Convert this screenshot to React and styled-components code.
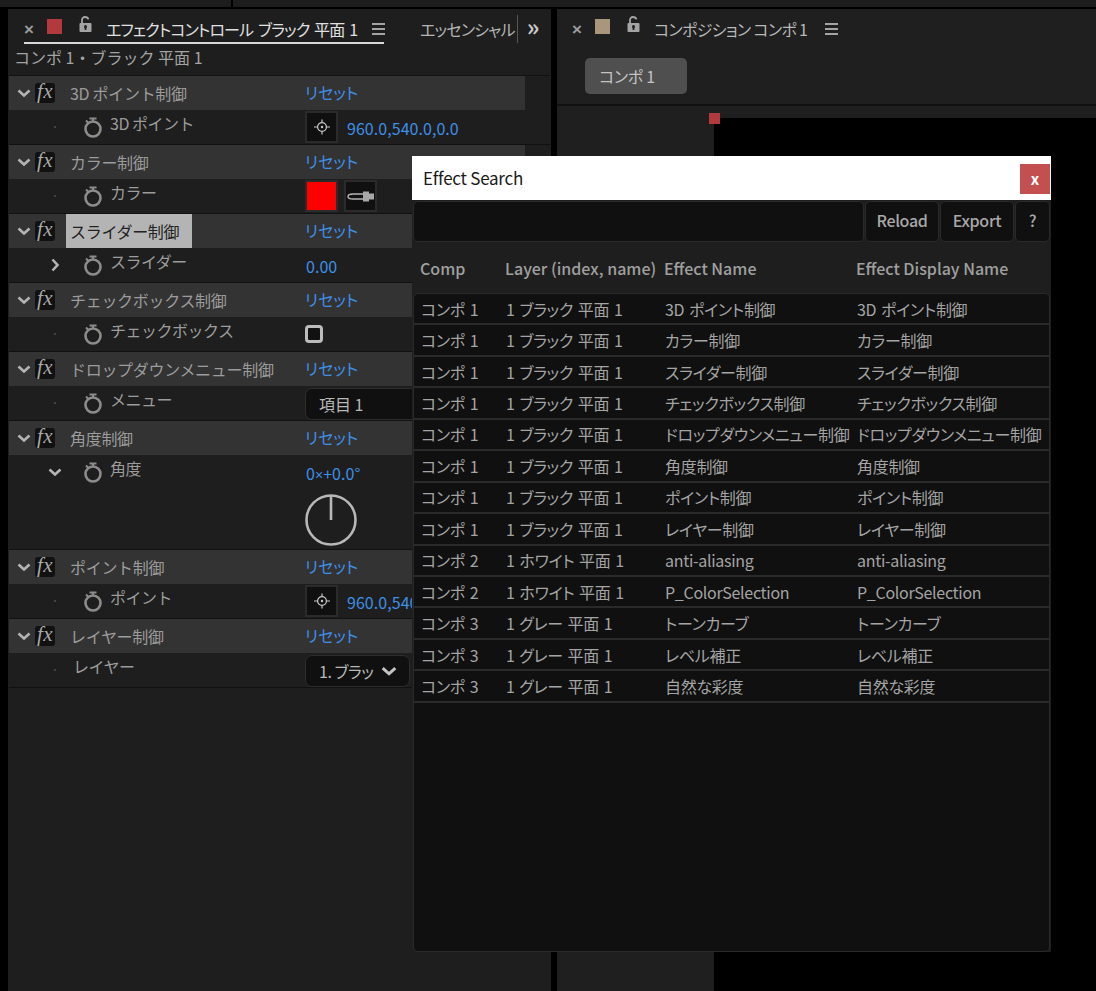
import React from "react";
import styled, { createGlobalStyle } from "styled-components";

const groups = [
  { name: "3D ポイント制御", label: "3D ポイント", kind: "point", value: "960.0,540.0,0.0" },
  { name: "カラー制御", label: "カラー", kind: "color" },
  { name: "スライダー制御", selected: true, label: "スライダー", kind: "value", value: "0.00", twirl: "right" },
  { name: "チェックボックス制御", label: "チェックボックス", kind: "check" },
  { name: "ドロップダウンメニュー制御", label: "メニュー", kind: "menu", value: "項目 1" },
  { name: "角度制御", label: "角度", kind: "angle", twirl: "down" },
  { name: "ポイント制御", label: "ポイント", kind: "point", value: "960.0,540.0,0.0" },
  { name: "レイヤー制御", label: "レイヤー", kind: "layer", value: "1. ブラッ", noWatch: true },
];

const results = [
  ["コンポ 1", "1 ブラック 平面 1", "3D ポイント制御"],
  ["コンポ 1", "1 ブラック 平面 1", "カラー制御"],
  ["コンポ 1", "1 ブラック 平面 1", "スライダー制御"],
  ["コンポ 1", "1 ブラック 平面 1", "チェックボックス制御"],
  ["コンポ 1", "1 ブラック 平面 1", "ドロップダウンメニュー制御"],
  ["コンポ 1", "1 ブラック 平面 1", "角度制御"],
  ["コンポ 1", "1 ブラック 平面 1", "ポイント制御"],
  ["コンポ 1", "1 ブラック 平面 1", "レイヤー制御"],
  ["コンポ 2", "1 ホワイト 平面 1", "anti-aliasing"],
  ["コンポ 2", "1 ホワイト 平面 1", "P_ColorSelection"],
  ["コンポ 3", "1 グレー 平面 1", "トーンカーブ"],
  ["コンポ 3", "1 グレー 平面 1", "レベル補正"],
  ["コンポ 3", "1 グレー 平面 1", "自然な彩度"],
];

const Chevron = ({ dir = "down", size = 14, color = "#b4b4b4" }) => (
  <svg width={size} height={size} viewBox="0 0 14 14" fill="none">
    <path
      d={dir === "down" ? "M1.500 4.500 7 9.500l5.500-5" : "M4.500 1.500 9.500 7l-5 5.500"}
      stroke={color}
      strokeWidth="2.600"
    />
  </svg>
);

const Stopwatch = () => (
  <svg width="18" height="21" viewBox="0 0 18 21" fill="none">
    <circle cx="9" cy="12" r="7.500" stroke="#8c8c8c" strokeWidth="2.600" />
    <path d="M5.500 1.500h7M9 1.500v3M2 3.500 4.500 6" stroke="#8c8c8c" strokeWidth="2" />
  </svg>
);

const Target = () => (
  <svg width="18" height="18" viewBox="0 0 18 18" fill="none">
    <circle cx="9" cy="9" r="4.400" stroke="#c8c8c8" strokeWidth="1.200" />
    <circle cx="9" cy="9" r="1.200" fill="#c8c8c8" />
    <path d="M1 9h4M13 9h4M9 1.500v3M9 13.500v3" stroke="#c8c8c8" strokeWidth="1.200" />
  </svg>
);

const Eyedropper = () => (
  <svg width="28" height="12" viewBox="0 0 28 12" fill="none">
    <path d="M1 6.500c0-1.500 2-2.500 5-2.500h11v5H6C3 9 1 8 1 6.500Z" stroke="#b4b4b4" strokeWidth="1.400" />
    <path d="M16 1.500h6V3.500h5v6h-5v2h-6Z" fill="#a8a8a8" />
  </svg>
);

const Lock = () => (
  <svg width="13" height="17" viewBox="0 0 13 17" fill="none">
    <path d="M3 8V4C3 2.200 4.200 1 6 1s3 .8 3.400 2.400" stroke="#a4a4a4" strokeWidth="1.800" />
    <rect x="0.500" y="7" width="12" height="9" rx="1" fill="#a4a4a4" />
    <circle cx="6.500" cy="10.500" r="1.500" fill="#1e1e1e" />
    <rect x="5.600" y="10.500" width="1.800" height="3.400" fill="#1e1e1e" />
  </svg>
);

const Dial = () => (
  <svg width="52" height="52" viewBox="0 0 52 52" fill="none">
    <circle cx="26" cy="26" r="24.500" stroke="#b8b8b8" strokeWidth="2.600" />
    <path d="M26 1.500V26" stroke="#b8b8b8" strokeWidth="2.600" />
  </svg>
);

const Control = ({ item }) => {
  switch (item.kind) {
    case "point":
      return (
        <>
          <IconWell><Target /></IconWell>
          <Value $gap>{item.value}</Value>
        </>
      );
    case "color":
      return (
        <>
          <IconWell $fill="#ff0000" />
          <IconWell $left><Eyedropper /></IconWell>
        </>
      );
    case "value":
      return <Value>{item.value}</Value>;
    case "check":
      return <Check />;
    case "menu":
      return <Select $wide><span>{item.value}</span></Select>;
    case "layer":
      return (
        <Select>
          <SelectText>{item.value}</SelectText>
          <Chevron size={16} color="#c4c4c4" />
        </Select>
      );
    case "angle":
      return (
        <AngleStack>
          <Value>0<Times>×</Times>+0.0°</Value>
          <Dial />
        </AngleStack>
      );
    default:
      return null;
  }
};

const App = () => {
  return (
    <Page>
      <GlobalStyle />
      <TopStrip>
        <TopCell $w={231} />
        <TopCell />
      </TopStrip>
      <Workspace>
        <EffectPanel>
          <TabBar>
            <CloseMark>×</CloseMark>
            <Swatch $color="#b23a3c" />
            <LockSlot><Lock /></LockSlot>
            <ActiveTab>エフェクトコントロール ブラック 平面 1</ActiveTab>
            <Burger />
            <TabUnderline />
            <OtherTab>エッセンシャル</OtherTab>
            <MoreTabs>»</MoreTabs>
          </TabBar>
          <Breadcrumb>コンポ 1・ブラック 平面 1</Breadcrumb>
          <EffectList>
            {groups.map((group) => (
              <li key={group.name}>
                <GroupHeader>
                  <TwirlSlot><Chevron /></TwirlSlot>
                  <FxBadge>fx</FxBadge>
                  <GroupName $selected={group.selected}>{group.name}</GroupName>
                  <Reset>リセット</Reset>
                </GroupHeader>
                <PropRow $tall={group.kind === "angle"}>
                  <PropTwirl>
                    {group.twirl ? <Chevron dir={group.twirl} /> : <Dot />}
                  </PropTwirl>
                  {group.noWatch ? null : (
                    <WatchSlot><Stopwatch /></WatchSlot>
                  )}
                  <PropLabel $plain={group.noWatch}>{group.label}</PropLabel>
                  <PropControl>
                    <Control item={group} />
                  </PropControl>
                </PropRow>
              </li>
            ))}
          </EffectList>
        </EffectPanel>
        <CompPanel>
          <CompTabBar>
            <CloseMark>×</CloseMark>
            <Swatch $color="#a8977a" />
            <LockSlot><Lock /></LockSlot>
            <CompTitle>コンポジション コンポ 1</CompTitle>
            <Burger />
          </CompTabBar>
          <CompCrumbs>
            <CompChip>コンポ 1</CompChip>
          </CompCrumbs>
          <Viewer>
            <ViewerMargin />
            <ViewerCanvas>
              <LayerHandle />
            </ViewerCanvas>
          </Viewer>
        </CompPanel>
      </Workspace>

      <SearchWindow>
        <TitleBar>
          <TitleText>Effect Search</TitleText>
          <WindowClose>x</WindowClose>
        </TitleBar>
        <SearchBar>
          <SearchInput />
          <ActionButton $w={74}>Reload</ActionButton>
          <ActionButton $w={74}>Export</ActionButton>
          <ActionButton $w={35}>?</ActionButton>
        </SearchBar>
        <HeadRow>
          <span>Comp</span>
          <span>Layer (index, name)</span>
          <span>Effect Name</span>
          <span>Effect Display Name</span>
        </HeadRow>
        <ResultBox>
          {results.map((row, i) => (
            <ResultRow key={i}>
              <span>{row[0]}</span>
              <span>{row[1]}</span>
              <span>{row[2]}</span>
              <span>{row[2]}</span>
            </ResultRow>
          ))}
        </ResultBox>
      </SearchWindow>
    </Page>
  );
};

const GlobalStyle = createGlobalStyle`
  html, body {
    margin: 0;
    padding: 0;
    background: #000;
  }
  * {
    box-sizing: border-box;
  }
`;

const Page = styled.div`
  position: relative;
  width: 1096px;
  height: 991px;
  overflow: hidden;
  background: #000;
  font-family: "Noto Sans CJK JP", "Noto Sans", sans-serif;
  font-feature-settings: "palt";
`;

const TopStrip = styled.div`
  display: flex;
  height: 7px;
  gap: 2px;
  margin-bottom: 2px;
`;
const TopCell = styled.div`
  background: #1d1d1d;
  flex: ${(p) => (p.$w ? `0 0 ${p.$w}px` : "1")};
`;

const Workspace = styled.div`
  display: flex;
  height: 982px;
  padding-left: 8px;
  gap: 6px;
`;

const EffectPanel = styled.section`
  flex: none;
  width: 543px;
  background: #1e1e1e;
  padding-left: 1px;
`;

const TabBar = styled.div`
  position: relative;
  display: flex;
  align-items: center;
  height: 35px;
  padding: 5px 0 0 15px;
`;

const CloseMark = styled.span`
  flex: none;
  width: 16px;
  color: #9c9c9c;
  font-family: "Liberation Sans", sans-serif;
  font-size: 17px;
  font-weight: 700;
  line-height: 1;
`;

const Swatch = styled.span`
  flex: none;
  width: 15px;
  height: 15px;
  margin: -5px 0 0 7px;
  background: ${(p) => p.$color};
`;

const LockSlot = styled.span`
  display: flex;
  flex: none;
  width: 13px;
  margin: -9px 0 0 17px;
`;

const ActiveTab = styled.span`
  flex: none;
  width: 248px;
  margin-left: 14px;
  color: #e0e0e0;
  font-size: 16px;
  letter-spacing: -0.85px;
  word-spacing: 2px;
  white-space: nowrap;
`;

const Burger = styled.span`
  flex: none;
  width: 13px;
  height: 12px;
  margin-left: 18px;
  border-top: 2px solid #a4a4a4;
  border-bottom: 2px solid #a4a4a4;
  background: linear-gradient(#a4a4a4, #a4a4a4) center / 100% 2px no-repeat;
`;

const TabUnderline = styled.span`
  position: absolute;
  left: 15px;
  bottom: 0;
  width: 360px;
  height: 2px;
  background: #d8d8d8;
`;

const OtherTab = styled.span`
  flex: none;
  margin-left: 35px;
  padding-right: 2px;
  border-right: 1px solid #555;
  color: #b4b4b4;
  font-size: 16px;
  line-height: 28px;
  letter-spacing: -0.8px;
  white-space: nowrap;
`;

const MoreTabs = styled.span`
  flex: none;
  margin: -6px 0 0 9px;
  color: #c8c8c8;
  font-size: 24px;
  line-height: 1;
  font-weight: 700;
`;

const Breadcrumb = styled.div`
  height: 32px;
  padding-left: 5px;
  border-bottom: 1px solid #111;
  color: #a4a4a4;
  font-size: 16px;
  font-feature-settings: normal;
  line-height: 27px;
  white-space: pre;
`;

const EffectList = styled.ul`
  margin: 0;
  padding: 0;
  list-style: none;
  & > li {
    border-bottom: 1px solid #111;
  }
`;

const GroupHeader = styled.div`
  display: flex;
  align-items: center;
  width: 516px;
  height: 34px;
  background: #333;
`;

const TwirlSlot = styled.span`
  display: flex;
  width: 26px;
  padding-left: 8px;
`;

const FxBadge = styled.span`
  width: 20px;
  height: 20px;
  margin-right: 1px;
  border-radius: 3px;
  background: #111;
  color: #a8a8a8;
  font-family: "Liberation Serif", serif;
  font-style: italic;
  font-size: 21px;
  line-height: 17px;
  letter-spacing: 0.5px;
  text-align: center;
`;

const GroupName = styled.span`
  display: flex;
  align-items: center;
  width: 249px;
  height: 34px;
  padding-left: 14px;
  color: #9c9c9c;
  font-size: 16px;
  font-feature-settings: normal;
  letter-spacing: -0.3px;
  white-space: nowrap;
  ${(p) =>
    p.$selected &&
    `
    width: 126px;
    margin: 0 113px 0 10px;
    padding-left: 4px;
    background: #b4b4b4;
    color: #222;
  `}
`;

const Reset = styled.span`
  padding-bottom: 2px;
  color: #3f8fe6;
  font-size: 16px;
`;

const PropRow = styled.div`
  display: flex;
  align-items: flex-start;
  height: ${(p) => (p.$tall ? 94 : 34)}px;
`;

const PropTwirl = styled.span`
  display: flex;
  flex: none;
  align-items: center;
  justify-content: center;
  width: 64px;
  height: 34px;
  padding-left: 28px;
`;

const Dot = styled.i`
  width: 2px;
  height: 2px;
  background: #444;
`;

const WatchSlot = styled.span`
  display: flex;
  align-items: center;
  width: 37px;
  height: 34px;
  padding-left: 11px;
`;

const PropLabel = styled.span`
  margin-left: ${(p) => (p.$plain ? 0 : 0)}px;
  width: ${(p) => (p.$plain ? 232 : 195)}px;
  color: #9c9c9c;
  font-size: 16px;
  font-feature-settings: normal;
  line-height: 26px;
  letter-spacing: -0.5px;
  white-space: nowrap;
`;

const PropControl = styled.div`
  display: flex;
  align-items: center;
  min-height: 34px;
`;

const IconWell = styled.span`
  display: flex;
  align-items: center;
  justify-content: center;
  width: 33px;
  height: 32px;
  margin-left: ${(p) => (p.$left ? 6 : 0)}px;
  border: 2px solid #2b2b2b;
  background: ${(p) => p.$fill || "#101010"};
`;

const Value = styled.span`
  margin: 2px 0 0 ${(p) => (p.$gap ? 9 : 1)}px;
  color: #3f8fe6;
  font-size: 16px;
  letter-spacing: 0.05px;
  white-space: nowrap;
`;

const Times = styled.span`
  font-family: "Liberation Sans", sans-serif;
  font-size: 14px;
`;

const Check = styled.span`
  width: 18px;
  height: 18px;
  border: 3px solid #bcbcbc;
  border-radius: 4px;
  background: #111;
`;

const Select = styled.div`
  display: flex;
  align-items: center;
  justify-content: space-between;
  width: ${(p) => (p.$wide ? 130 : 105)}px;
  height: 32px;
  padding: 0 12px 0 13px;
  margin-top: 1px;
  border: 1px solid #2d2d2d;
  border-radius: 7px;
  background: #101010;
  color: #b8b8b8;
  font-size: 16px;
  white-space: nowrap;
`;

const SelectText = styled.span`
  letter-spacing: -0.5px;
`;

const AngleStack = styled.div`
  display: flex;
  flex-direction: column;
  align-items: flex-start;
  gap: 7px;
  padding-top: 4px;
  line-height: 24px;
`;

const CompPanel = styled.section`
  display: flex;
  flex: 1;
  flex-direction: column;
  background: #1f1f1f;
`;

const CompTabBar = styled.div`
  display: flex;
  align-items: center;
  height: 35px;
  padding: 5px 0 0 15px;
`;

const CompTitle = styled.span`
  flex: none;
  margin-left: 14px;
  color: #b8b8b8;
  font-size: 16px;
  letter-spacing: -0.7px;
  white-space: nowrap;
`;

const CompCrumbs = styled.div`
  height: 62px;
  padding: 14px 0 0 28px;
  border-bottom: 2px solid #111;
`;

const CompChip = styled.span`
  display: block;
  width: 102px;
  height: 36px;
  padding-left: 14px;
  border-radius: 5px;
  background: #4f4f4f;
  color: #c4c4c4;
  font-size: 16px;
  line-height: 36px;
  letter-spacing: -0.3px;
`;

const Viewer = styled.div`
  display: flex;
  flex: 1;
  padding-top: 12px;
`;

const ViewerMargin = styled.div`
  width: 157px;
`;

const ViewerCanvas = styled.div`
  position: relative;
  flex: 1;
  background: #000;
`;

const LayerHandle = styled.span`
  position: absolute;
  left: -5px;
  top: -5px;
  width: 11px;
  height: 11px;
  background: #b23a3c;
`;

const SearchWindow = styled.div`
  position: absolute;
  left: 412px;
  top: 156px;
  display: flex;
  flex-direction: column;
  width: 639px;
  height: 796px;
  background: #1e1e1e;
`;

const TitleBar = styled.div`
  display: flex;
  align-items: center;
  justify-content: space-between;
  height: 44px;
  padding: 0 1px 0 11px;
  background: #fff;
`;

const TitleText = styled.span`
  margin-top: -1px;
  color: #1a1a1a;
  font-size: 17px;
  letter-spacing: -0.25px;
`;

const WindowClose = styled.span`
  width: 30px;
  height: 30px;
  margin-top: 1px;
  background: #c44f50;
  color: #fff;
  font-size: 15px;
  font-weight: 700;
  line-height: 29px;
  text-align: center;
`;

const SearchBar = styled.div`
  display: flex;
  gap: 1px;
  height: 41px;
  margin-top: 1px;
  padding: 0 1px;
`;

const SearchInput = styled.div`
  flex: 1;
  border: 1px solid #2a2a2a;
  border-radius: 5px;
  background: #101010;
`;

const ActionButton = styled.div`
  flex: 0 0 ${(p) => p.$w}px;
  border: 1px solid #2a2a2a;
  border-radius: 5px;
  background: #101010;
  color: #a8a8a8;
  font-size: 16px;
  font-weight: 500;
  line-height: 36px;
  text-align: center;
  letter-spacing: -0.3px;
`;

const HeadRow = styled.div`
  display: grid;
  grid-template-columns: 85px 159px 192px 1fr;
  align-items: center;
  height: 51px;
  padding-left: 8px;
  color: #a0a0a0;
  font-size: 16px;
  font-weight: 500;
  white-space: nowrap;
`;

const ResultBox = styled.div`
  flex: 1;
  margin: 0 1px;
  border: 1px solid #2a2a2a;
  border-radius: 5px;
  background: #101010;
`;

const ResultRow = styled.div`
  display: grid;
  grid-template-columns: 85px 159px 192px 1fr;
  align-items: center;
  height: 31.45px;
  padding-left: 7px;
  border-bottom: 2px solid #2a2a2a;
  color: #a4a4a4;
  font-size: 16px;
  letter-spacing: -0.3px;
  word-spacing: 1.5px;
  white-space: nowrap;
`;

export default App;
